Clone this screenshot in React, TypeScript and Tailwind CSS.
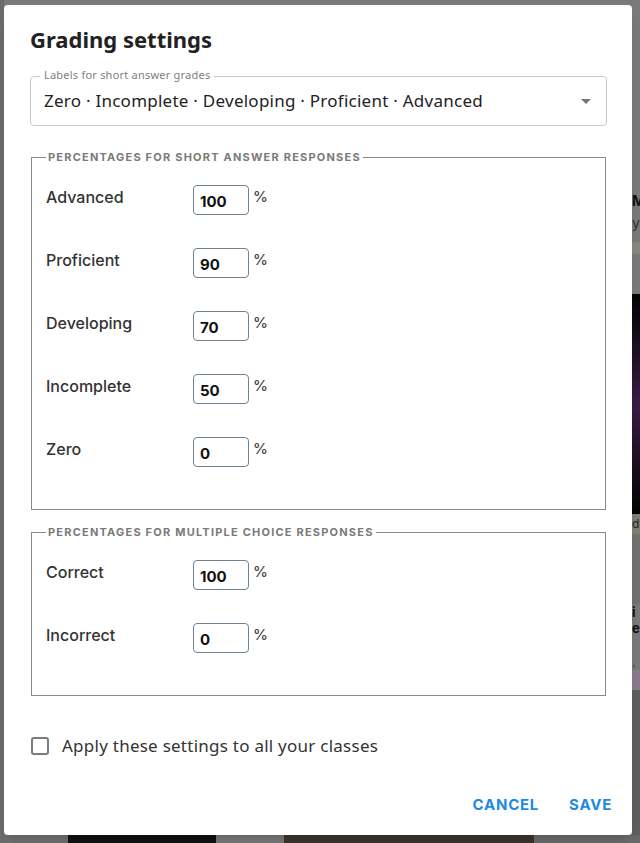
import { useState } from 'react'

const shortRows = [
  { label: 'Advanced', value: '100' },
  { label: 'Proficient', value: '90' },
  { label: 'Developing', value: '70' },
  { label: 'Incomplete', value: '50' },
  { label: 'Zero', value: '0' },
]

const mcRows = [
  { label: 'Correct', value: '100' },
  { label: 'Incorrect', value: '0' },
]

function PercentRow({ label, value }: { label: string; value: string }) {
  const [v, setV] = useState(value)
  return (
    <div className="flex items-start">
      <div className="w-[147px] text-[16px] leading-6 font-medium text-[#333]">{label}</div>
      <input
        value={v}
        onChange={(e) => setV(e.target.value)}
        className="w-[56px] h-[30px] border border-[#6f8292] rounded-[4px] pl-[6px] pt-[3px] text-[15px] font-bold text-[#111] outline-none"
      />
      <span className="ml-[4px] text-[15px] leading-6 font-medium text-[#444]">%</span>
    </div>
  )
}

function Section({ title, rows }: { title: string; rows: { label: string; value: string }[] }) {
  return (
    <fieldset className="mx-px border border-[#8a8a8a] pl-[14px] pt-[22px] pb-[42px]">
      <legend className="px-[2px] text-[11px] leading-[12px] font-bold tracking-[0.11em] text-[#7a7a7a]">
        {title}
      </legend>
      <div className="flex flex-col gap-[33px]">
        {rows.map((r) => (
          <PercentRow key={r.label} label={r.label} value={r.value} />
        ))}
      </div>
    </fieldset>
  )
}

export default function App() {
  const [applyAll, setApplyAll] = useState(false)

  return (
    <div className="relative h-[843px] w-[640px] overflow-hidden bg-[#7a7a7a]" style={{ fontFamily: 'Inter, "Noto Sans", sans-serif' }}>
      {/* page behind the overlay */}
      <div className="absolute right-0 top-0 w-[8px] h-full flex flex-col overflow-hidden">
        <div className="h-[190px]" />
        <div className="h-[22px] w-[8px] overflow-hidden text-[14px] font-bold leading-[22px] text-[#111]">M</div>
        <div className="h-[30px] w-[8px] overflow-hidden text-[14px] leading-[22px] text-[#333]">y</div>
        <div className="h-[12px] bg-[#858b7c]" />
        <div className="h-[40px]" />
        <div className="h-[220px] bg-gradient-to-b from-[#050505] via-[#3b1c46] to-[#050505]" />
        <div className="h-[20px] bg-[#7d8075] text-[12px] leading-[20px] text-[#222]">d</div>
        <div className="h-[70px] bg-[#727272]" />
        <div className="h-[50px] w-[8px] overflow-hidden text-[13px] font-bold leading-[16px] text-[#111]">i e</div>
        <div className="h-[16px] w-[8px] overflow-hidden text-[12px] text-[#333]">.</div>
        <div className="h-[20px] bg-[#8a7a8e]" />
        <div className="flex-1 bg-[#5f5f5f]" />
      </div>
      <div className="absolute left-0 bottom-0 w-full h-[8px] flex">
        <div className="w-[68px] bg-[#6e6e6e]" />
        <div className="w-[148px] bg-[#111]" />
        <div className="w-[68px] bg-[#777]" />
        <div className="w-[250px] bg-[#3d332d]" />
        <div className="flex-1 bg-[#6a6a6a]" />
      </div>
      <div className="absolute left-0 top-0 w-[4px] h-full bg-[#6c6c6c]" />

      {/* dialog */}
      <div className="absolute left-[4px] top-[5px] w-[628px] h-[830px] bg-white rounded-[4px] shadow-lg flex flex-col pl-[26px] pr-[25px] pt-[18px]">
        <h1
          className="text-[22px] leading-[32px] font-bold text-[#222]"
          style={{ fontFamily: '"Noto Sans", sans-serif' }}
        >
          Grading settings
        </h1>

        <div className="relative mt-[21px] h-[50px] border border-[#c9c9c9] rounded-[4px] flex items-center pl-[13px] pr-[14px]">
          <span
            className="absolute left-[9px] -top-[9px] bg-white px-[4px] text-[11px] leading-[14px] tracking-[0.02em] text-[#808080]"
            style={{ fontFamily: '"Noto Sans", sans-serif' }}
          >
            Labels for short answer grades
          </span>
          <span
            className="flex-1 text-[17px] tracking-[0.25px] text-[#222]"
            style={{ fontFamily: '"Noto Sans", sans-serif' }}
          >
            Zero · Incomplete · Developing · Proficient · Advanced
          </span>
          <svg width="10" height="5" viewBox="0 0 10 5" className="mr-px">
            <path d="M0 0 L10 0 L5 5 Z" fill="#757575" />
          </svg>
        </div>

        <div className="mt-[25px]">
          <Section title="PERCENTAGES FOR SHORT ANSWER RESPONSES" rows={shortRows} />
        </div>
        <div className="mt-[16px]">
          <Section title="PERCENTAGES FOR MULTIPLE CHOICE RESPONSES" rows={mcRows} />
        </div>

        <label className="mt-[38px] flex items-center gap-[13px] pl-px cursor-pointer">
          <span
            onClick={() => setApplyAll(!applyAll)}
            className={`w-[18px] h-[18px] rounded-[3px] border-2 ${applyAll ? 'border-[#1e88e5] bg-[#1e88e5]' : 'border-[#7b7b7b]'}`}
          />
          <span
            className="text-[17px] leading-6 tracking-[0.25px] text-[#333]"
            style={{ fontFamily: '"Noto Sans", sans-serif' }}
          >
            Apply these settings to all your classes
          </span>
        </label>

        <div className="mt-[29px] -mr-[13px] flex justify-end gap-[14px]">
          <button className="h-[36px] px-[8px] text-[15px] font-bold tracking-[0.05em] text-[#1e88e5]">CANCEL</button>
          <button className="h-[36px] px-[8px] text-[15px] font-bold tracking-[0.05em] text-[#1e88e5]">SAVE</button>
        </div>
      </div>
    </div>
  )
}
